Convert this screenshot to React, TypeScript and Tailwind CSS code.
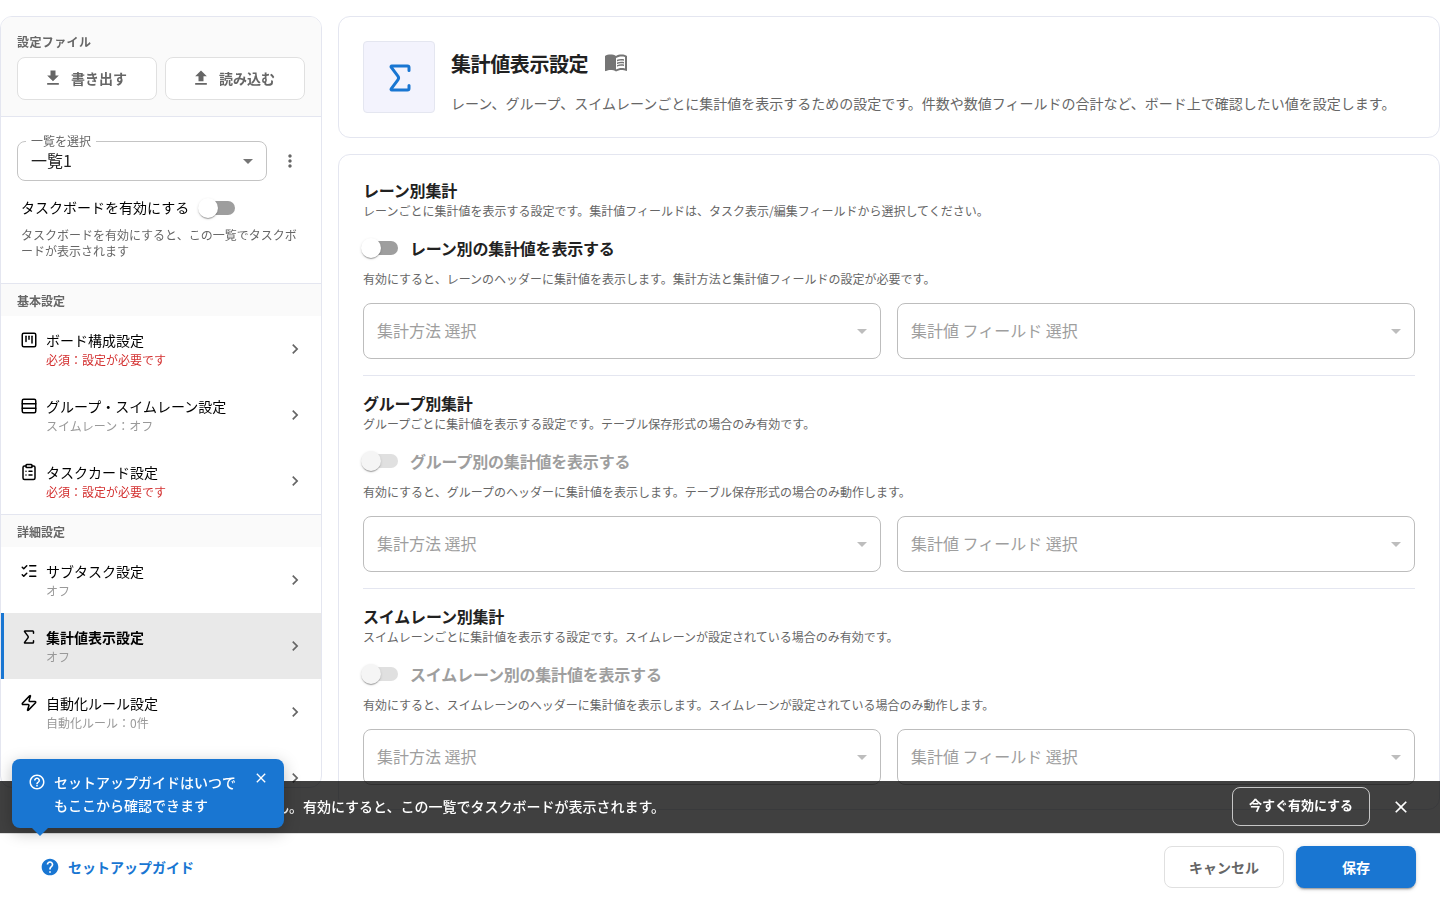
import type { ReactNode } from 'react'
import {
  ClipboardList,
  ListChecks,
  Rows3,
  Settings,
  Sigma,
  SquareKanban,
  Zap,
  type LucideIcon,
} from 'lucide-react'
import {
  MdArrowDropDown,
  MdChevronRight,
  MdClose,
  MdFileDownload,
  MdFileUpload,
  MdHelp,
  MdHelpOutline,
  MdMenuBook,
  MdMoreVert,
} from 'react-icons/md'
import clsx from 'clsx'

type NavItem = {
  label: string
  note: string
  icon: LucideIcon
  required?: boolean
  active?: boolean
}

const basicItems: NavItem[] = [
  { label: 'ボード構成設定', note: '必須：設定が必要です', icon: SquareKanban, required: true },
  { label: 'グループ・スイムレーン設定', note: 'スイムレーン：オフ', icon: Rows3 },
  { label: 'タスクカード設定', note: '必須：設定が必要です', icon: ClipboardList, required: true },
]

const detailItems: NavItem[] = [
  { label: 'サブタスク設定', note: 'オフ', icon: ListChecks },
  { label: '集計値表示設定', note: 'オフ', icon: Sigma, active: true },
  { label: '自動化ルール設定', note: '自動化ルール：0件', icon: Zap },
  { label: 'その他の設定', note: '', icon: Settings },
]

const sections = [
  {
    title: 'レーン別集計',
    lead: 'レーンごとに集計値を表示する設定です。集計値フィールドは、タスク表示/編集フィールドから選択してください。',
    toggle: 'レーン別の集計値を表示する',
    help: '有効にすると、レーンのヘッダーに集計値を表示します。集計方法と集計値フィールドの設定が必要です。',
    disabled: false,
  },
  {
    title: 'グループ別集計',
    lead: 'グループごとに集計値を表示する設定です。テーブル保存形式の場合のみ有効です。',
    toggle: 'グループ別の集計値を表示する',
    help: '有効にすると、グループのヘッダーに集計値を表示します。テーブル保存形式の場合のみ動作します。',
    disabled: true,
  },
  {
    title: 'スイムレーン別集計',
    lead: 'スイムレーンごとに集計値を表示する設定です。スイムレーンが設定されている場合のみ有効です。',
    toggle: 'スイムレーン別の集計値を表示する',
    help: '有効にすると、スイムレーンのヘッダーに集計値を表示します。スイムレーンが設定されている場合のみ動作します。',
    disabled: true,
  },
]

function Switch({ disabled = false }: { disabled?: boolean }) {
  return (
    <button
      role="switch"
      aria-checked={false}
      disabled={disabled}
      className="flex h-5 w-[37px] shrink-0 items-center"
    >
      <span
        className={clsx(
          'z-10 size-5 rounded-full shadow-[0_2px_1px_-1px_rgba(0,0,0,0.2),0_1px_1px_rgba(0,0,0,0.14),0_1px_3px_rgba(0,0,0,0.12)]',
          disabled ? 'bg-[#f5f5f5]' : 'bg-white',
        )}
      />
      <span
        className={clsx(
          '-ml-[17px] h-3.5 w-[34px] rounded-[7px]',
          disabled ? 'bg-[#e0e0e0]' : 'bg-[#9e9e9e]',
        )}
      />
    </button>
  )
}

function FileButton({ icon, children }: { icon: ReactNode; children: ReactNode }) {
  return (
    <button className="flex h-[43px] flex-1 items-center justify-center gap-2 rounded-lg border border-[#e0e0e0] bg-white pr-1 pb-0.5 text-sm font-bold text-[#666]">
      {icon}
      {children}
    </button>
  )
}

function NavGroup({ title, items }: { title: string; items: NavItem[] }) {
  return (
    <section className="border-t border-[#e4e6f0]">
      <h3 className="h-8 bg-[#fafafa] px-4 text-xs leading-[33px] font-bold text-[#666]">{title}</h3>
      {items.map((item) => (
        <NavRow key={item.label} item={item} />
      ))}
    </section>
  )
}

function NavRow({ item }: { item: NavItem }) {
  const Icon = item.icon
  return (
    <a
      className={clsx(
        'flex h-[66px] items-center border-l-[3px] pr-4 pl-4',
        item.active ? 'border-[#1976d2] bg-[#e9e9e9]' : 'border-transparent',
      )}
    >
      <Icon size={18} className="mb-[19px] shrink-0 text-black" />
      <span className="ml-2 flex-1 pt-0.5">
        <span className={clsx('block text-sm leading-5 text-black', item.active && 'font-bold')}>
          {item.label}
        </span>
        <span
          className={clsx(
            'block min-h-5 text-xs leading-5',
            item.required ? 'text-[#d32f2f]' : 'text-[#999]',
          )}
        >
          {item.note}
        </span>
      </span>
      <MdChevronRight size={20} className="text-[#666]" />
    </a>
  )
}

function Sidebar() {
  return (
    <aside className="h-[772px] w-[322px] shrink-0 overflow-hidden rounded-xl border border-[#e4e6f0] bg-white will-change-transform">
      <div className="h-[99px] bg-[#fafafa] px-4 pt-4">
        <h2 className="text-xs leading-[18px] font-bold tracking-[0.4px] text-[#666]">
          設定ファイル
        </h2>
        <div className="mt-1.5 flex gap-2">
          <FileButton icon={<MdFileDownload size={20} />}>書き出す</FileButton>
          <FileButton icon={<MdFileUpload size={20} />}>読み込む</FileButton>
        </div>
      </div>

      <div className="h-[167px] border-t border-[#e4e6f0] px-4 pt-6">
        <div className="flex items-center">
          <div className="relative flex h-10 w-[250px] items-center justify-between rounded-lg border border-[#c4c4c4] pr-1.5 pl-[13px] text-[#212121]">
            <span className="absolute -top-[9px] left-2 bg-white px-[5px] text-xs leading-4 text-[#666]">
              一覧を選択
            </span>
            <span className="pb-0.5">一覧1</span>
            <MdArrowDropDown size={24} className="text-[#757575]" />
          </div>
          <MdMoreVert size={20} className="ml-[13px] text-[#666]" />
        </div>
        <div className="mt-[17px] flex h-5 items-center gap-[9px] pl-1 text-sm text-black">
          <span className="pb-0.5">タスクボードを有効にする</span>
          <Switch />
        </div>
        <p className="mt-[9px] pl-1 text-xs leading-4 text-[#666]">
          タスクボードを有効にすると、この一覧でタスクボードが表示されます
        </p>
      </div>

      <NavGroup title="基本設定" items={basicItems} />
      <NavGroup title="詳細設定" items={detailItems} />
    </aside>
  )
}

function SelectBox({ label }: { label: string }) {
  return (
    <div className="flex h-14 flex-1 items-center justify-between rounded-lg border border-[#bdbdbd] pr-1.5 pl-[13px] text-base text-[#9e9e9e]">
      <span className="pb-0.5">{label}</span>
      <MdArrowDropDown size={24} className="text-[#bdbdbd]" />
    </div>
  )
}

function PageHeader() {
  return (
    <header className="flex h-[122px] gap-4 rounded-xl border border-[#e4e6f0] bg-white p-6">
      <div className="flex size-[72px] shrink-0 items-center justify-center rounded border border-[#e4e6f0] bg-[#f3f3fd] pt-px pl-px">
        <Sigma size={36} className="text-[#1976d2]" />
      </div>
      <div>
        <div className="flex h-11 items-center gap-4">
          <h1 className="pt-px text-xl font-bold tracking-[-0.02em] text-[#212121]">
            集計値表示設定
          </h1>
          <MdMenuBook size={24} className="-mt-0.5 text-[#757575]" />
        </div>
        <p className="mt-2 text-sm leading-[21px] text-[#666]">
          レーン、グループ、スイムレーンごとに集計値を表示するための設定です。件数や数値フィールドの合計など、ボード上で確認したい値を設定します。
        </p>
      </div>
    </header>
  )
}

function SummarySection({ section }: { section: (typeof sections)[number] }) {
  return (
    <section className="h-[213px] border-b border-[#e4e6f0] pt-[15px] last:border-0">
      <h2 className="text-base leading-6 font-bold tracking-[-0.2px] text-[#212121]">
        {section.title}
      </h2>
      <p className="text-xs leading-[18px] text-[#666]">{section.lead}</p>
      <div className="mt-[18px] -ml-0.5 flex h-5 items-center gap-3">
        <Switch disabled={section.disabled} />
        <span
          className={clsx(
            'text-base font-bold tracking-[-0.2px]',
            section.disabled ? 'text-[#9e9e9e]' : 'text-[#212121]',
          )}
        >
          {section.toggle}
        </span>
      </div>
      <p className="mt-3 text-xs leading-[18px] text-[#666]">{section.help}</p>
      <div className="mt-[15px] flex gap-4">
        <SelectBox label="集計方法 選択" />
        <SelectBox label="集計値 フィールド 選択" />
      </div>
    </section>
  )
}

// Dark bar shown above the footer while the board is still disabled
function Notice() {
  return (
    <div className="absolute inset-x-0 top-[781px] flex h-[52px] items-center bg-black/75 pr-[29px] text-sm font-medium text-white">
      <p className="flex-1 pb-0.5 pl-6">
        現在タスクボードが有効になっていません。有効にすると、この一覧でタスクボードが表示されます。
      </p>
      <button className="mb-px h-[39px] w-[138px] rounded-lg border border-white/70 pb-0.5 text-[13px] font-bold">
        今すぐ有効にする
      </button>
      <MdClose size={20} className="ml-[21px]" />
    </div>
  )
}

function GuideTip() {
  return (
    <div className="absolute top-[759px] left-3 flex h-[69px] w-[272px] rounded-lg bg-[#1976d2] pt-3 pl-4 text-white shadow-[0_4px_16px_rgba(0,0,0,0.25)]">
      <MdHelpOutline size={18} className="mt-0.5 shrink-0" />
      <p className="ml-2 w-[184px] text-sm leading-[23px] font-medium">
        セットアップガイドはいつでもここから確認できます
      </p>
      <MdClose size={16} className="-mt-px ml-[15px]" />
      <span className="absolute top-full left-5 border-x-8 border-t-8 border-x-transparent border-t-[#1976d2]" />
    </div>
  )
}

export default function App() {
  return (
    <div className="relative flex h-screen flex-col overflow-hidden bg-white font-['Noto_Sans_CJK_JP',sans-serif]">
      <div className="flex h-[833px] shrink-0 gap-4 overflow-hidden pt-4">
        <Sidebar />
        <main className="flex flex-1 flex-col gap-4">
          <PageHeader />
          <div className="h-[656px] rounded-xl border border-[#e4e6f0] bg-white px-6 pt-2">
            {sections.map((section) => (
              <SummarySection key={section.title} section={section} />
            ))}
          </div>
        </main>
      </div>

      <footer className="flex h-[67px] items-center gap-3 border-t border-[#e0e0e0] bg-white pr-6 pl-10">
        <a className="mr-auto flex items-center gap-2 text-sm font-bold text-[#1976d2]">
          <MdHelp size={20} />
          セットアップガイド
        </a>
        <button className="h-[42px] w-[120px] rounded-lg border border-[#e0e0e0] text-sm font-bold text-[#666]">
          キャンセル
        </button>
        <button className="h-[42px] w-[120px] rounded-lg bg-[#1976d2] text-sm font-bold text-white shadow-[0_3px_1px_-2px_rgba(0,0,0,0.2),0_2px_2px_rgba(0,0,0,0.14),0_1px_5px_rgba(0,0,0,0.12)]">
          保存
        </button>
      </footer>

      <Notice />
      <GuideTip />
    </div>
  )
}
